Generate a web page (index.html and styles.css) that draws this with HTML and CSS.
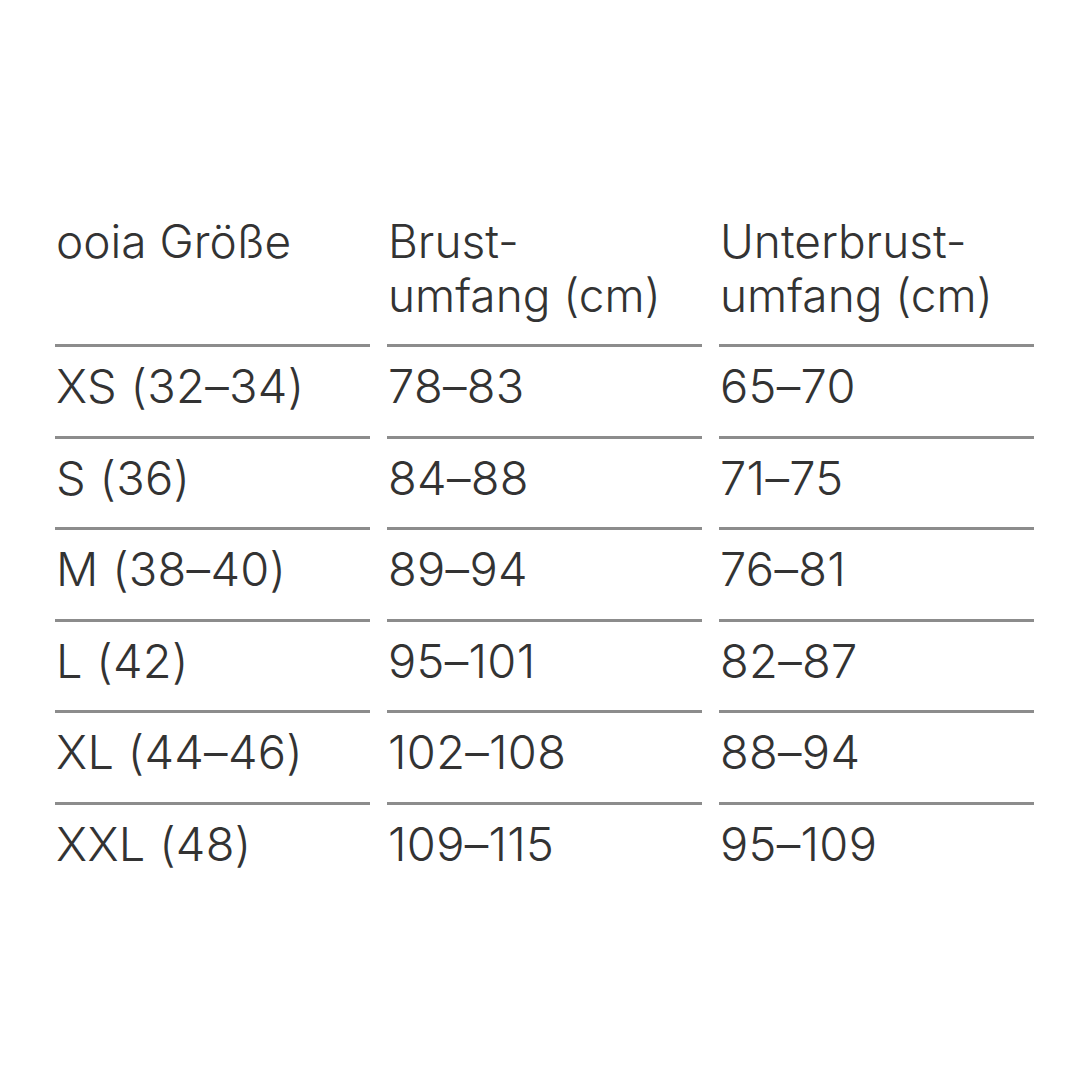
FILE: index.html
```html
<!DOCTYPE html>
<html lang="de">
<head>
<meta charset="utf-8">
<title>Größentabelle</title>
<link rel="stylesheet" href="styles.css">
</head>
<body>
<div class="size-table">
  <div class="head">ooia Größe</div>
  <div class="head">Brust-<br>umfang (cm)</div>
  <div class="head">Unterbrust-<br>umfang (cm)</div>

  <div class="cell">XS (32–34)</div>
  <div class="cell">78–83</div>
  <div class="cell">65–70</div>

  <div class="cell">S (36)</div>
  <div class="cell">84–88</div>
  <div class="cell">71–75</div>

  <div class="cell">M (38–40)</div>
  <div class="cell">89–94</div>
  <div class="cell">76–81</div>

  <div class="cell">L (42)</div>
  <div class="cell">95–101</div>
  <div class="cell">82–87</div>

  <div class="cell">XL (44–46)</div>
  <div class="cell">102–108</div>
  <div class="cell">88–94</div>

  <div class="cell">XXL (48)</div>
  <div class="cell">109–115</div>
  <div class="cell">95–109</div>
</div>
</body>
</html>
```
FILE: styles.css
```css
html, body {
  margin: 0;
  padding: 0;
  background: #ffffff;
}

body {
  width: 1080px;
  height: 1080px;
  font-family: Inter, "Liberation Sans", sans-serif;
  color: #333333;
}

.size-table {
  display: grid;
  grid-template-columns: repeat(3, 315px);
  column-gap: 17px;
  padding: 214px 0 0 55px;
  line-height: 54px;
  font-weight: 330;
}

.head {
  font-size: 46px;
  letter-spacing: 0;
  padding-bottom: 22px;
  padding-left: 1px;
}

.cell {
  box-sizing: border-box;
  height: 91.6px;
  border-top: 3px solid #8c8c8c;
  padding-top: 12px;
  padding-left: 1px;
  font-size: 47px;
  letter-spacing: 0.3px;
  white-space: nowrap;
}
```
